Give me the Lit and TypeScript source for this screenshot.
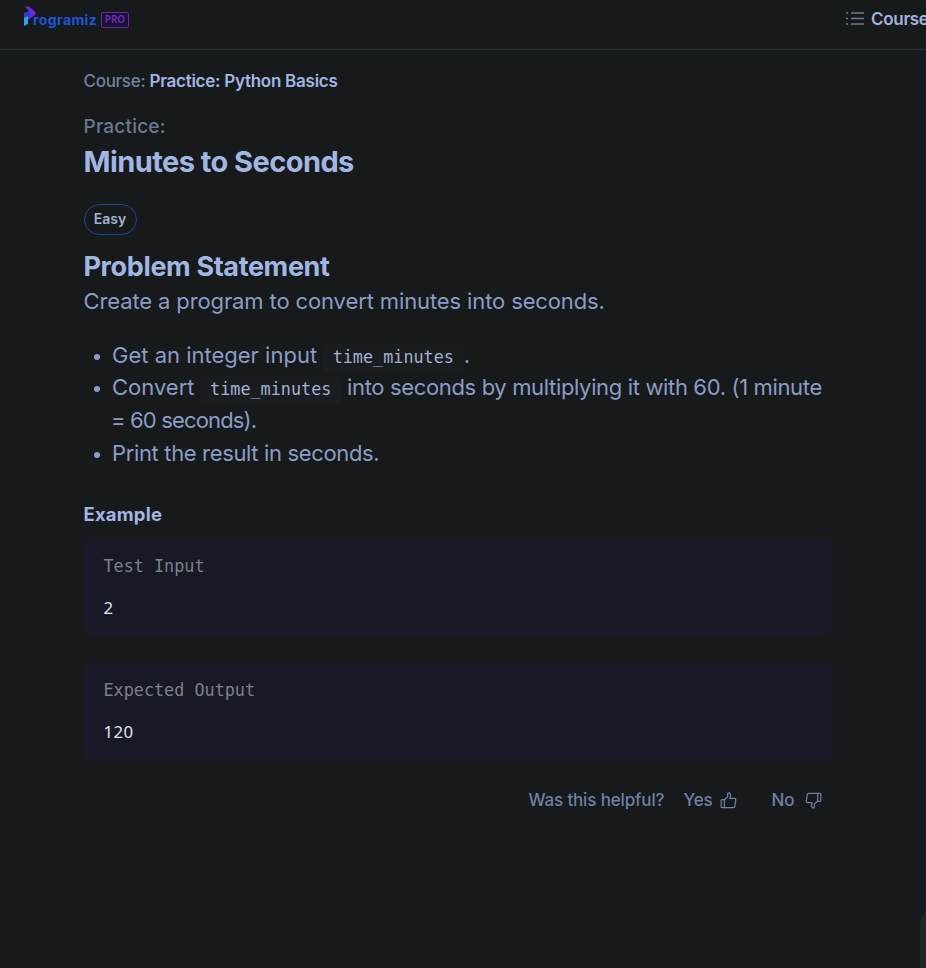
import { LitElement, html, css, svg } from "lit";
import { customElement } from "lit/decorators.js";

const thumb = svg`<path d="M1.2 8.2q0-.9.9-.9h2.1v7.9H2.1q-.9 0-.9-.9zM4.2 7.8 7.4 4.7V2.2Q7.4.9 8.5.9q1.8.3 1.8 2.7L9.6 6.3h4.6q1.2.1 1.1 1.4l-1 6.2q-.2 1.3-1.5 1.3H4.2"/>`;

@customElement("app-root")
export class AppRoot extends LitElement {
  static styles = css`
    :host {
      display: block;
      position: relative;
      width: 926px;
      height: 968px;
      overflow: hidden;
      background: #161a1b;
      color: #8c9cc6;
      font-family: Inter, "Liberation Sans", sans-serif;
      box-sizing: border-box;
    }
    * { box-sizing: border-box; }
    svg { display: block; fill: none; }
    p, h1, h2, h3, ul { margin: 0; padding: 0; }
    header {
      height: 50px;
      display: flex;
      align-items: flex-start;
      justify-content: space-between;
      border-bottom: 1px solid #28363f;
      overflow: hidden;
    }
    .brand { display: flex; padding: 6px 0 0 23px; }
    .name {
      font: 700 14px/20px Inter, sans-serif;
      letter-spacing: 0.4px;
      color: #1d55d8;
      margin: 4px 0 0 -4px;
      width: 68px;
    }
    .pro {
      margin-top: 6px;
      width: 28px;
      height: 16px;
      border: 1.5px solid #642aad;
      border-radius: 2px;
      color: #7029c0;
      background: #1a1230;
      font: 600 10px/13px "Noto Sans", sans-serif;
      text-align: center;
    }
    .nav {
      display: flex;
      width: 80px;
      padding-top: 8px;
      gap: 7px;
      font-size: 17px;
      line-height: 22px;
      font-weight: 600;
      color: #a2b2d8;
      white-space: nowrap;
    }
    .nav svg { flex: none; margin-top: 3px; }
    .nav span { letter-spacing: -0.3px; }
    main { width: 748px; margin-left: 83.5px; padding-top: 19px; white-space: nowrap; }
    .crumb { font-size: 17px; line-height: 24px; font-weight: 500; color: #74809f; letter-spacing: -0.3px; }
    .crumb b { font-weight: 600; color: #a2b6e2; letter-spacing: -0.26px; }
    .kicker { margin-top: 22px; font-size: 19px; line-height: 24px; font-weight: 500; color: #6e7891; letter-spacing: 0.2px; }
    h1 { margin-top: 3px; font-size: 29px; line-height: 40px; font-weight: 700; color: #a2b6e2; letter-spacing: -0.56px; }
    .pill {
      margin-top: 22px;
      width: 53px;
      height: 31px;
      border: 1px solid #1d4498;
      border-radius: 16px;
      text-align: center;
      font-size: 14px;
      line-height: 28px;
      font-weight: 600;
      color: #a2b2d8;
    }
    h2 { margin-top: 14px; font-size: 27px; line-height: 36px; font-weight: 700; color: #a2b6e2; letter-spacing: -0.37px; }
    .lead { font-size: 22px; line-height: 32.5px; letter-spacing: -0.12px; }
    ul { list-style: none; margin-top: 21px; }
    li { position: relative; padding-left: 28.5px; font-size: 22px; line-height: 33px; }
    li:nth-child(2) { margin-top: -1px; }
    li::before {
      content: "";
      position: absolute;
      left: 10px;
      top: 15px;
      width: 6px;
      height: 6px;
      border-radius: 50%;
      background: #8c9cc6;
    }
    .tail { letter-spacing: -0.35px; }
    .wrap { letter-spacing: -0.85px; margin-left: -1px; }
    code {
      display: inline-block;
      width: 141px;
      height: 27px;
      margin-left: -0.5px;
      vertical-align: 0;
      border-radius: 4px;
      background: #191d1f;
      color: #a4b1d0;
      font: 16.8px/26px "DejaVu Sans Mono", monospace;
      text-align: center;
    }
    h3 { margin-top: 32.5px; font-size: 18.5px; line-height: 24px; font-weight: 700; color: #a2b6e2; letter-spacing: 0.2px; }
    .box {
      margin-top: 13px;
      height: 96px;
      padding: 14px 19px;
      border: 1px solid #191b2b;
      border-radius: 5px;
      background: #171a26;
      font: 16.8px/24px "DejaVu Sans Mono", monospace;
      color: #7f8087;
    }
    .box + .box { margin-top: 28px; height: 97px; }
    .value { margin-top: 18px; font-family: "Noto Sans", sans-serif; letter-spacing: 0.45px; color: #e2e4e6; }
    .feedback {
      display: flex;
      height: 24px;
      margin: 28px 0 0 445px;
      font-size: 17px;
      line-height: 24px;
      font-weight: 500;
      color: #727fa3;
      letter-spacing: -0.15px;
    }
    .ask { width: 155px; }
    .yes { width: 36px; }
    .no { width: 33px; margin-left: 35px; }
    .feedback svg { flex: none; width: 17px; height: 17px; margin-top: 4px; stroke: #727fa3; stroke-width: 1.2; stroke-linejoin: round; }
    .flip { transform: rotate(180deg); }
    .rail { position: absolute; right: 0; top: 51px; width: 6px; bottom: 0; background: #151826; }
    .corner { position: absolute; left: 920px; top: 909px; width: 40px; height: 59px; border-radius: 16px 0 0 0; background: #222525; }
  `;

  render() {
    return html`
      <header>
        <div class="brand">
          <svg width="14" height="21" viewBox="0 0 14 21">
            <path d="M1 9 5 7V18L1 20Z" fill="#23a5f5" />
            <path d="M1 7 8 4 10 8 5 10 1 12Z" fill="#2440dc" />
            <path d="M2 .5H6L12.5 6V8.5L5 14V11L8 7.5Z" fill="#7427d8" />
          </svg>
          <span class="name">rogramiz</span>
          <span class="pro">PRO</span>
        </div>
        <div class="nav">
          <svg width="18" height="15" viewBox="0 0 18 15" stroke="#6f7990" stroke-width="1.6">
            <path d="M0 2H2M5 2H18M0 7.5H2M5 7.5H18M0 13H2M5 13H18" />
          </svg>
          <span>Course</span>
        </div>
      </header>
      <main>
        <p class="crumb"><span>Course: </span><b>Practice: Python Basics</b></p>
        <p class="kicker">Practice:</p>
        <h1>Minutes to Seconds</h1>
        <div class="pill">Easy</div>
        <h2>Problem Statement</h2>
        <p class="lead">Create a program to convert minutes into seconds.</p>
        <ul>
          <li>Get an integer input <code>time_minutes</code>.</li>
          <li>Convert <code>time_minutes</code><span class="tail"> into seconds by multiplying it with 60. (1 minute</span><br /><span class="wrap">= 60 seconds).</span></li>
          <li class="tail">Print the result in seconds.</li>
        </ul>
        <h3>Example</h3>
        <section class="box"><p>Test Input</p><p class="value">2</p></section>
        <section class="box"><p>Expected Output</p><p class="value">120</p></section>
        <div class="feedback">
          <span class="ask">Was this helpful?</span>
          <span class="yes">Yes</span>
          <svg viewBox="0 0 16.5 16.5">${thumb}</svg>
          <span class="no">No</span>
          <svg class="flip" viewBox="0 0 16.5 16.5">${thumb}</svg>
        </div>
      </main>
      <div class="rail"></div>
      <div class="corner"></div>
    `;
  }
}
